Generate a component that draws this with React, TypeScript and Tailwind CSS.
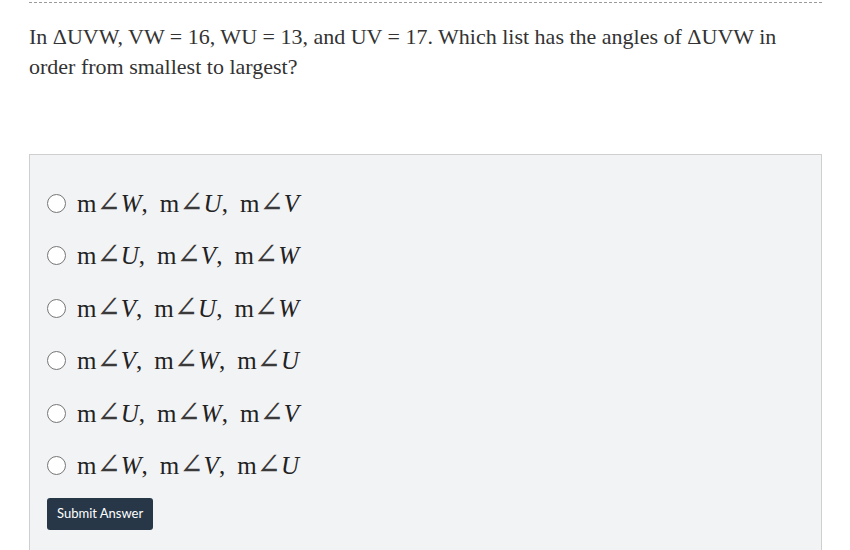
import React from "react";

const options = [
  ["W", "U", "V"],
  ["U", "V", "W"],
  ["V", "U", "W"],
  ["V", "W", "U"],
  ["U", "W", "V"],
  ["W", "V", "U"],
];

const Angle = ({ v }: { v: string }) => (
  <span className="inline-flex items-baseline">
    <span>m</span>
    <span
      className="text-[29px] leading-none text-[#3a3a3a]"
      style={{ fontFamily: '"DejaVu Serif", serif' }}
    >
      ∠
    </span>
    <span className="italic">{v}</span>
  </span>
);

export default function App() {
  return (
    <div className="w-[850px] h-[550px] overflow-hidden bg-white">
      <div className="mx-[29px] w-[793px]">
        <div className="mt-[2px] border-t border-dashed border-[#9a9a9a]" />
        <p
          className="mt-[19px] text-[22px] leading-[30px] text-[#333]"
          style={{ fontFamily: '"Liberation Serif", serif' }}
        >
          In ΔUVW, VW = 16, WU = 13, and UV = 17. Which list has the angles of ΔUVW in
          order from smallest to largest?
        </p>
        <div className="mt-[72px] border border-[#cfcfcf] bg-[#f2f3f5] h-[420px] pt-[22px] px-[17px]">
          <div className="flex flex-col">
            {options.map((o, i) => (
              <label key={i} className="flex items-center h-[52.5px]">
                <span className="w-[19px] h-[19px] rounded-full border border-[#767676] bg-white shrink-0" />
                <span
                  className="ml-[11px] text-[25px] text-[#222] flex items-baseline"
                  style={{ fontFamily: '"Liberation Serif", serif' }}
                >
                  <Angle v={o[0]} />
                  <span className="mr-[12px]">,</span>
                  <Angle v={o[1]} />
                  <span className="mr-[12px]">,</span>
                  <Angle v={o[2]} />
                </span>
              </label>
            ))}
          </div>
          <button
            className="mt-[6px] h-[32px] px-[10px] rounded-[3px] bg-[#283748] text-white text-[13px]"
            style={{ fontFamily: "Lato, sans-serif" }}
          >
            Submit Answer
          </button>
        </div>
      </div>
    </div>
  );
}
